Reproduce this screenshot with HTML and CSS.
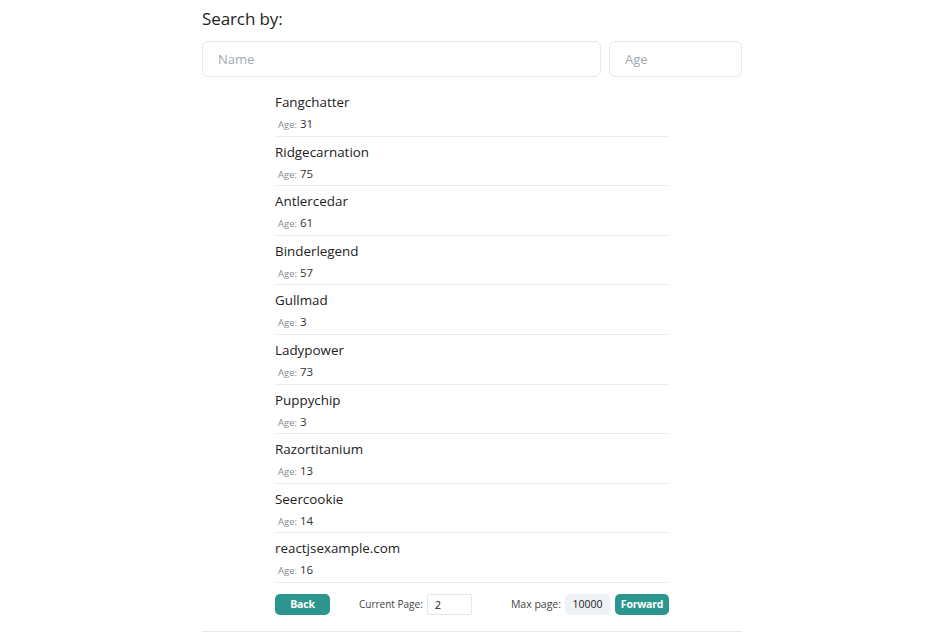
FILE: index.html
```html
<!DOCTYPE html>
<html>
<head>
<meta charset="utf-8">
<link rel="stylesheet" href="styles.css">
</head>
<body>
<div class="wrap">
  <h2 class="title">Search by:</h2>
  <div class="search">
    <input class="inp name" placeholder="Name">
    <input class="inp age" placeholder="Age">
  </div>
  <div class="list">
    <div class="item"><div class="nm">Fangchatter</div><div class="ag"><span class="lb">Age:</span> 31</div></div>
    <div class="item"><div class="nm">Ridgecarnation</div><div class="ag"><span class="lb">Age:</span> 75</div></div>
    <div class="item"><div class="nm">Antlercedar</div><div class="ag"><span class="lb">Age:</span> 61</div></div>
    <div class="item"><div class="nm">Binderlegend</div><div class="ag"><span class="lb">Age:</span> 57</div></div>
    <div class="item"><div class="nm">Gullmad</div><div class="ag"><span class="lb">Age:</span> 3</div></div>
    <div class="item"><div class="nm">Ladypower</div><div class="ag"><span class="lb">Age:</span> 73</div></div>
    <div class="item"><div class="nm">Puppychip</div><div class="ag"><span class="lb">Age:</span> 3</div></div>
    <div class="item"><div class="nm">Razortitanium</div><div class="ag"><span class="lb">Age:</span> 13</div></div>
    <div class="item"><div class="nm">Seercookie</div><div class="ag"><span class="lb">Age:</span> 14</div></div>
    <div class="item"><div class="nm">reactjsexample.com</div><div class="ag"><span class="lb">Age:</span> 16</div></div>
    <div class="pager">
      <button class="btn">Back</button>
      <div class="cur"><span class="plb">Current Page:</span><input class="pin" value="2"></div>
      <div class="max"><span class="plb">Max page:</span><span class="badge">10000</span><button class="btn fwd">Forward</button></div>
    </div>
  </div>
</div>
</body>
</html>
```
FILE: styles.css
```css
html, body { margin: 0; padding: 0; background: #fff; }
body { font-family: "Open Sans", "Noto Sans", sans-serif; color: #222; }
.wrap {
  width: 540px;
  margin-left: 202px;
  padding-top: 7px;
  padding-bottom: 16px;
  border-bottom: 1px solid #e8e8e8;
}
.title {
  margin: 0;
  font-size: 17px;
  font-weight: 400;
  line-height: 24px;
  color: #222;
  letter-spacing: -0.1px;
}
.search {
  display: flex;
  gap: 8px;
  margin-top: 10px;
}
.inp {
  box-sizing: border-box;
  height: 36px;
  border: 1px solid #e4e7eb;
  border-radius: 6px;
  padding: 0 15px;
  font-family: inherit;
  font-size: 13px;
  color: #333;
  outline: none;
}
.inp::placeholder { color: #a3a9b1; }
.name { width: 399px; }
.age { width: 133px; }
.list {
  width: 394px;
  margin: 10px auto 0;
}
.item {
  padding: 5px 0 2px;
  border-bottom: 1px solid #ececec;
  height: 41.6px;
}
.nm { font-size: 13.4px; line-height: 20px; color: #222; }
.ag { font-size: 11.5px; line-height: 20px; margin-top: 2px; padding-left: 3px; color: #333; }
.lb { font-size: 9.5px; color: #8a8a8a; }
.pager {
  display: flex;
  align-items: center;
  padding-top: 11px;
}
.btn {
  box-sizing: border-box;
  height: 21px;
  border: none;
  border-radius: 5px;
  background: #2c968e;
  color: #fff;
  font-family: inherit;
  font-weight: 700;
  font-size: 10.5px;
  padding: 0;
  width: 55px;
  letter-spacing: -0.2px;
}
.fwd { width: 54px; margin-left: 5px; }
.cur, .max { display: flex; align-items: center; }
.cur { margin-left: 29px; }
.plb { font-size: 10.5px; color: #444; margin-right: 4px; }
.cur .plb { font-size: 10px; }
.pin {
  box-sizing: border-box;
  width: 45px;
  height: 21px;
  border: 1px solid #e4e7eb;
  border-radius: 2px;
  padding: 0 7px;
  font-family: inherit;
  font-size: 11px;
  color: #222;
  outline: none;
}
.max { margin-left: auto; }
.badge {
  display: inline-flex;
  align-items: center;
  justify-content: center;
  height: 21px;
  width: 45px;
  background: #eef1f5;
  border-radius: 5px;
  font-size: 10.5px;
  color: #222;
}
```
